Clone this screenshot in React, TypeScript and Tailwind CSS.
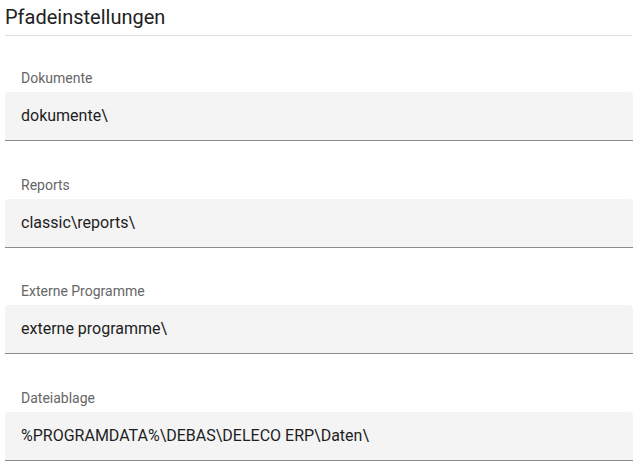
const fields = [
  { label: 'Dokumente', value: 'dokumente\\' },
  { label: 'Reports', value: 'classic\\reports\\' },
  { label: 'Externe Programme', value: 'externe programme\\' },
  { label: 'Dateiablage', value: '%PROGRAMDATA%\\DEBAS\\DELECO ERP\\Daten\\' },
]

export default function App() {
  return (
    <div className="min-h-[468px] bg-white pl-[5px] font-['Roboto',sans-serif]">
      <div className="w-[627px]">
        {/* Header */}
        <h1 className="h-[36px] border-b border-[#e0e0e0] pt-[3px] text-[20px] leading-[28px] text-[#222]">
          Pfadeinstellungen
        </h1>

        <div className="flex flex-col gap-[35.5px] pt-[34px]">
          {fields.map(f => (
            <div key={f.label}>
              <div className="h-[22px] pl-4 text-[14px] leading-[17px] text-[#666]">{f.label}</div>
              <div className="flex h-[49px] w-[628px] items-center rounded-t-[4px] border-b border-[#8c8c8c] bg-[#f4f4f4] px-4">
                <span className="text-[16px] text-[#1e1e1e]">{f.value}</span>
              </div>
            </div>
          ))}
        </div>
      </div>
    </div>
  )
}
